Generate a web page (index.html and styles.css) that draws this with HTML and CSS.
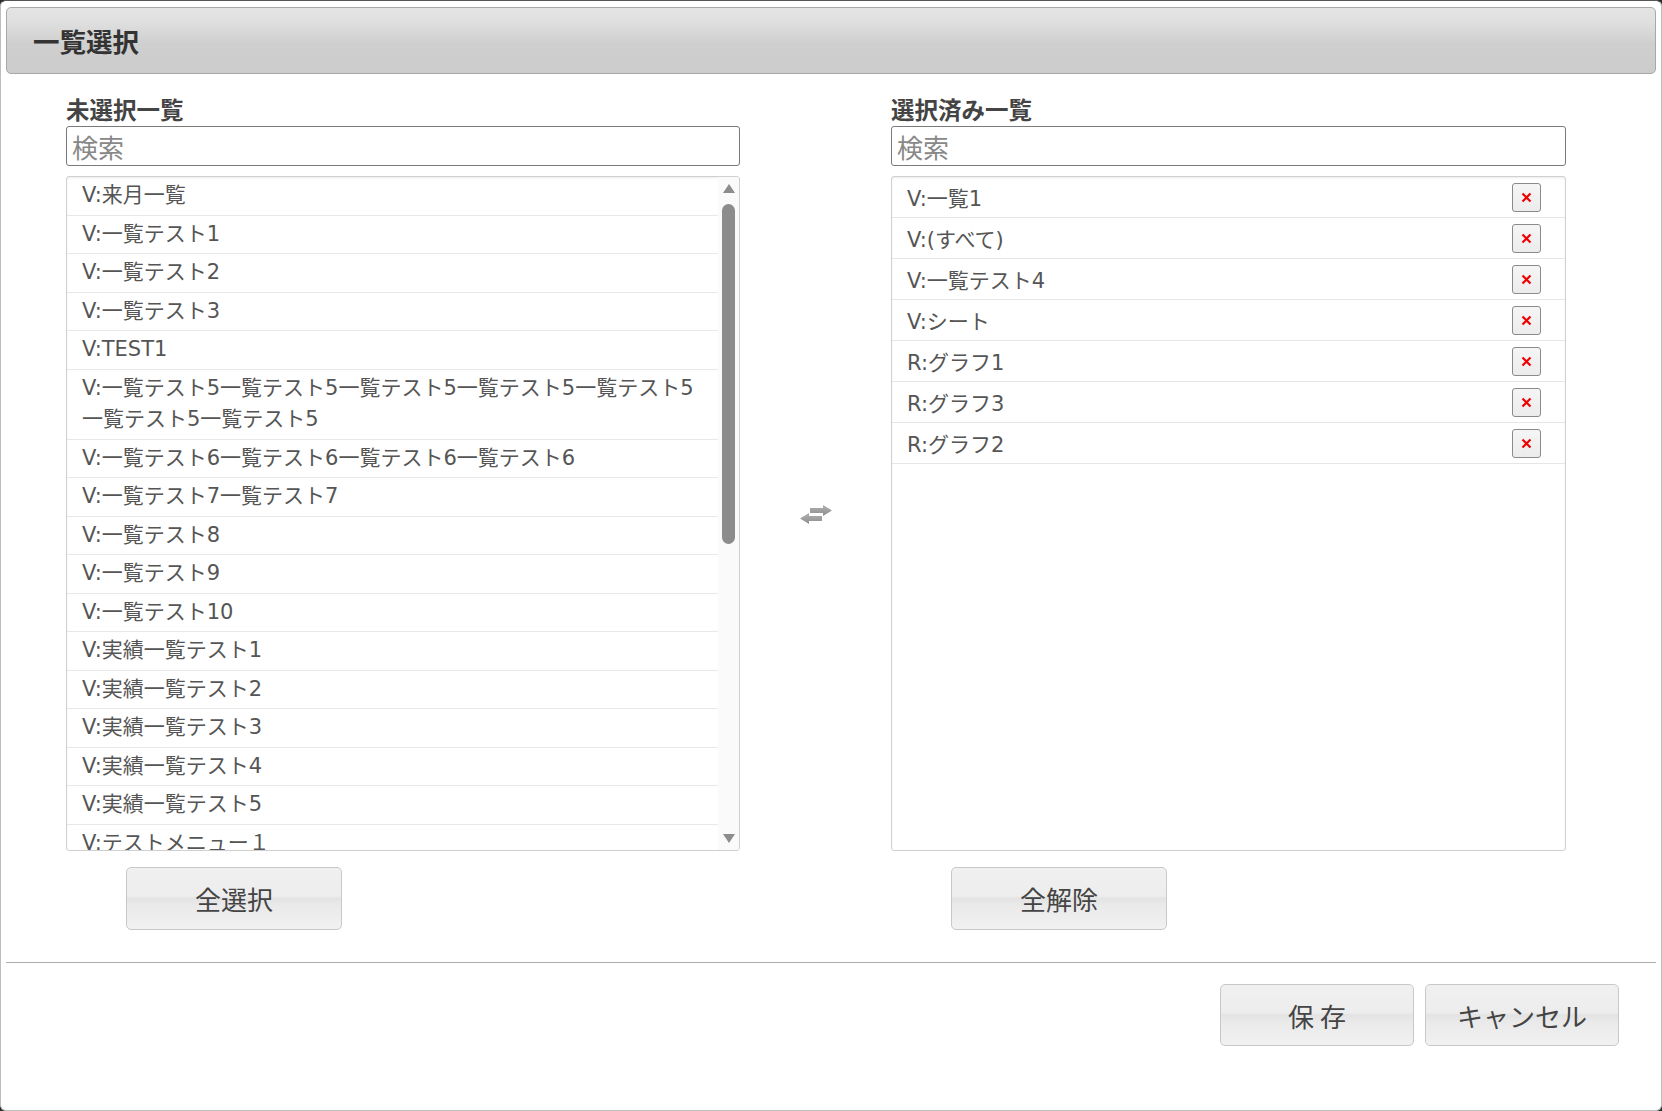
FILE: index.html
```html
<!DOCTYPE html>
<html lang="ja">
<head>
<meta charset="utf-8">
<title>一覧選択</title>
<link rel="stylesheet" href="styles.css">
</head>
<body>
<div class="modal">
  <div class="header"><span class="title">一覧選択</span></div>

  <div class="panes">
    <div class="label col-left row-label">未選択一覧</div>
    <div class="label col-right row-label">選択済み一覧</div>

    <input class="search col-left row-search" type="text" placeholder="検索">
    <input class="search col-right row-search" type="text" placeholder="検索">

    <div class="list list-left col-left row-list">
      <div class="items">
        <div class="item">V:来月一覧</div>
        <div class="item">V:一覧テスト1</div>
        <div class="item">V:一覧テスト2</div>
        <div class="item">V:一覧テスト3</div>
        <div class="item">V:TEST1</div>
        <div class="item">V:一覧テスト5一覧テスト5一覧テスト5一覧テスト5一覧テスト5一覧テスト5一覧テスト5</div>
        <div class="item">V:一覧テスト6一覧テスト6一覧テスト6一覧テスト6</div>
        <div class="item">V:一覧テスト7一覧テスト7</div>
        <div class="item">V:一覧テスト8</div>
        <div class="item">V:一覧テスト9</div>
        <div class="item">V:一覧テスト10</div>
        <div class="item">V:実績一覧テスト1</div>
        <div class="item">V:実績一覧テスト2</div>
        <div class="item">V:実績一覧テスト3</div>
        <div class="item">V:実績一覧テスト4</div>
        <div class="item">V:実績一覧テスト5</div>
        <div class="item">V:テストメニュー１</div>
      </div>
      <div class="scrollbar">
        <span class="arrow-up"></span>
        <span class="thumb"></span>
        <span class="arrow-down"></span>
      </div>
    </div>

    <div class="swap col-mid row-list">
      <svg width="34" height="20" viewBox="0 0 34 20">
        <defs>
          <linearGradient id="g" x1="0" y1="0" x2="0" y2="1">
            <stop offset="0" stop-color="#b0b0b0"/>
            <stop offset="1" stop-color="#8e8e8e"/>
          </linearGradient>
        </defs>
        <path d="M11 3 H24 V0 L33 5.5 L24 11 V8 H11 Z" fill="url(#g)"/>
        <path d="M23 11 H10 V8 L1 13.5 L10 19 V16 H23 Z" fill="url(#g)"/>
      </svg>
    </div>

    <div class="list list-right col-right row-list">
      <div class="sel"><span>V:一覧1</span><button class="del"><svg width="11" height="11" viewBox="0 0 11 11"><path d="M1.5 1.5 L9.5 9.5 M9.5 1.5 L1.5 9.5"/></svg></button></div>
      <div class="sel"><span>V:(すべて)</span><button class="del"><svg width="11" height="11" viewBox="0 0 11 11"><path d="M1.5 1.5 L9.5 9.5 M9.5 1.5 L1.5 9.5"/></svg></button></div>
      <div class="sel"><span>V:一覧テスト4</span><button class="del"><svg width="11" height="11" viewBox="0 0 11 11"><path d="M1.5 1.5 L9.5 9.5 M9.5 1.5 L1.5 9.5"/></svg></button></div>
      <div class="sel"><span>V:シート</span><button class="del"><svg width="11" height="11" viewBox="0 0 11 11"><path d="M1.5 1.5 L9.5 9.5 M9.5 1.5 L1.5 9.5"/></svg></button></div>
      <div class="sel"><span>R:グラフ1</span><button class="del"><svg width="11" height="11" viewBox="0 0 11 11"><path d="M1.5 1.5 L9.5 9.5 M9.5 1.5 L1.5 9.5"/></svg></button></div>
      <div class="sel"><span>R:グラフ3</span><button class="del"><svg width="11" height="11" viewBox="0 0 11 11"><path d="M1.5 1.5 L9.5 9.5 M9.5 1.5 L1.5 9.5"/></svg></button></div>
      <div class="sel"><span>R:グラフ2</span><button class="del"><svg width="11" height="11" viewBox="0 0 11 11"><path d="M1.5 1.5 L9.5 9.5 M9.5 1.5 L1.5 9.5"/></svg></button></div>
    </div>

    <div class="col-left row-btn btn-wrap"><button class="btn btn-wide">全選択</button></div>
    <div class="col-right row-btn btn-wrap"><button class="btn btn-wide">全解除</button></div>
  </div>

  <div class="divider"></div>

  <div class="footer">
    <button class="btn btn-foot">保 存</button>
    <button class="btn btn-foot">キャンセル</button>
  </div>
</div>
</body>
</html>
```

FILE: styles.css
```css
html, body {
  margin: 0;
  padding: 0;
}

body {
  background: #2b2b2b;
  font-family: "DejaVu Sans", "Noto Sans CJK JP", sans-serif;
  color: #555;
}

.modal {
  width: 1662px;
  height: 1111px;
  box-sizing: border-box;
  background: #fff;
  border: 1px solid #bdbdbd;
  border-top-color: #555;
  border-radius: 6px;
  padding: 6px 5px 0;
  display: flex;
  flex-direction: column;
}

.header {
  height: 67px;
  box-sizing: border-box;
  border: 1px solid #a8a8a8;
  border-radius: 5px;
  background: linear-gradient(#e4e4e4 0%, #e0e0e0 20%, #cfcfcf 55%, #cccccc 100%);
  padding-left: 26px;
  display: flex;
  align-items: center;
}

.title {
  font-family: "Noto Sans CJK JP", sans-serif;
  font-weight: bold;
  font-size: 26.5px;
  color: #333;
}

.panes {
  display: grid;
  grid-template-columns: 674px 151px 675px;
  grid-template-rows: auto auto 675px auto;
  margin: 21px 0 0 60px;
}

.col-left { grid-column: 1; }
.col-mid { grid-column: 2; }
.col-right { grid-column: 3; }
.row-label { grid-row: 1; }
.row-search { grid-row: 2; }
.row-list { grid-row: 3; }
.row-btn { grid-row: 4; }

.label {
  font-family: "Noto Sans CJK JP", sans-serif;
  font-weight: bold;
  font-size: 23.5px;
  line-height: 28px;
  color: #444;
  margin-bottom: 3px;
}

.search {
  display: block;
  width: 100%;
  height: 40px;
  box-sizing: border-box;
  margin: 0 0 10px;
  border: 1px solid #7a7a7a;
  border-radius: 3px;
  padding: 0 5px;
  font-family: "Noto Sans CJK JP", sans-serif;
  font-size: 26px;
  color: #555;
  background: #fff;
  outline: none;
}

.search::placeholder {
  color: #888;
}

.list {
  box-sizing: border-box;
  border: 1px solid #d0d0d0;
  border-radius: 3px;
  box-shadow: inset 0 1px 2px rgba(0, 0, 0, 0.08);
  overflow: hidden;
  background: #fff;
}

.list-left {
  display: flex;
}

.items {
  flex: 1;
  overflow: hidden;
}

.item {
  padding: 3px 15px;
  line-height: 31.5px;
  font-size: 21px;
  color: #555;
  border-bottom: 1px solid #e8e8e8;
}

.scrollbar {
  width: 21px;
  flex: none;
  background: #fafafa;
  display: flex;
  flex-direction: column;
  align-items: center;
}

.arrow-up {
  margin-top: 7px;
  width: 0;
  height: 0;
  border-left: 6.5px solid transparent;
  border-right: 6.5px solid transparent;
  border-bottom: 9px solid #8c8c8c;
}

.thumb {
  margin-top: 11px;
  width: 13px;
  height: 340px;
  border-radius: 7px;
  background: #8c8c8c;
}

.arrow-down {
  margin-top: auto;
  margin-bottom: 7px;
  width: 0;
  height: 0;
  border-left: 6.5px solid transparent;
  border-right: 6.5px solid transparent;
  border-top: 9px solid #8c8c8c;
}

.swap {
  display: flex;
  align-items: center;
  justify-content: center;
  padding-top: 3px;
}

.swap svg {
  display: block;
}

.sel {
  display: flex;
  align-items: center;
  justify-content: space-between;
  height: 41px;
  box-sizing: border-box;
  padding: 0 24px 0 15px;
  border-bottom: 1px solid #e6e6e6;
  font-size: 21px;
  color: #555;
}

.del {
  width: 29px;
  height: 29px;
  box-sizing: border-box;
  padding: 0;
  border: 1px solid #8a8a8a;
  border-radius: 3px;
  background: linear-gradient(#f5f5f5, #ececec);
  display: flex;
  align-items: center;
  justify-content: center;
}

.del svg {
  display: block;
}

.del path {
  stroke: #f00000;
  stroke-width: 2.2;
  fill: none;
}

.btn-wrap {
  padding: 16px 0 0 60px;
}

.btn {
  box-sizing: border-box;
  border: 1px solid #c8c8c8;
  border-radius: 5px;
  background: linear-gradient(#f0f0f0 0%, #ededed 46%, #e3e3e3 50%, #eaeaea 62%, #f1f1f1 100%);
  font-family: "Noto Sans CJK JP", sans-serif;
  font-size: 26px;
  color: #444;
  padding: 0;
  display: block;
}

.btn-wide {
  width: 216px;
  height: 63px;
}

.divider {
  margin-top: 32px;
  border-top: 1px solid #ababab;
}

.footer {
  display: flex;
  justify-content: flex-end;
  gap: 11px;
  margin-top: 21px;
  padding-right: 37px;
}

.btn-foot {
  width: 194px;
  height: 62px;
}
```
